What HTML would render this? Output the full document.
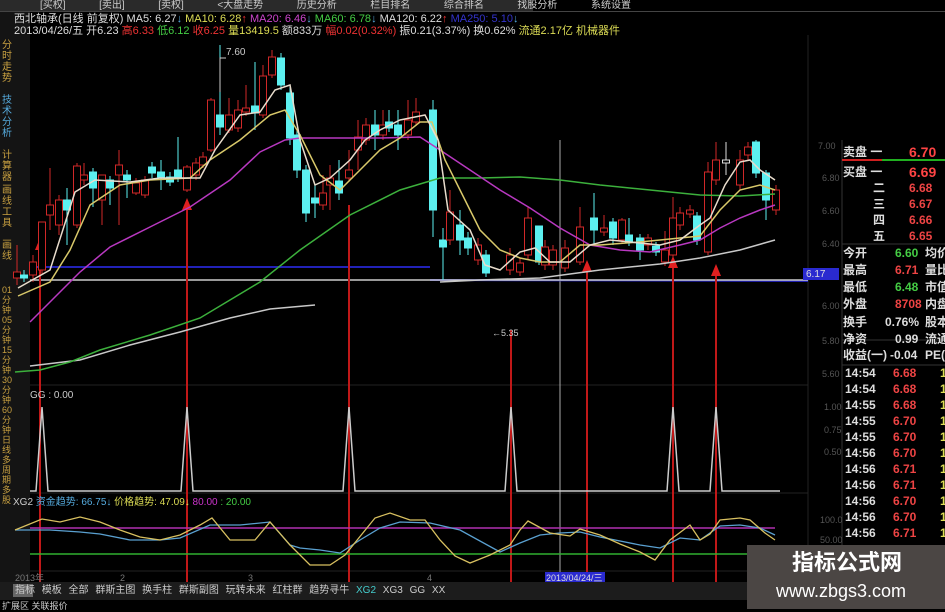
<!DOCTYPE html>
<html><head><meta charset="utf-8">
<style>
body{margin:0;background:#000;width:945px;height:609px;overflow:hidden;position:relative;font-family:"Liberation Sans","Noto Sans CJK SC",sans-serif}
.t{position:absolute;white-space:nowrap;font-size:11px;line-height:12px}
.rp{position:absolute;left:843px;width:110px;font-size:12px;line-height:14px;font-weight:bold;color:#ddd;white-space:nowrap}
.rp span{position:absolute;white-space:nowrap}
</style></head><body>
<svg width="945" height="609" style="position:absolute;left:0;top:0" xmlns="http://www.w3.org/2000/svg">
<rect x="0" y="0" width="533" height="11" fill="#2a2a2a"/>
<rect x="0" y="11" width="945" height="1" fill="#444"/>
<rect x="0" y="12" width="30" height="570" fill="#141414"/>
<g stroke="#222" stroke-width="1">
<line x1="30" y1="385" x2="808" y2="385"/><line x1="30" y1="493" x2="808" y2="493"/><line x1="30" y1="571" x2="808" y2="571"/>
<line x1="808" y1="35" x2="808" y2="571"/>
</g>
<line x1="842" y1="140" x2="842" y2="560" stroke="#333"/>
<line x1="842" y1="340" x2="945" y2="340" stroke="#333"/>
<line x1="842" y1="244" x2="945" y2="244" stroke="#333"/>
<line x1="842" y1="365" x2="945" y2="365" stroke="#333"/>
<line x1="560" y1="140" x2="560" y2="576" stroke="#aaa" stroke-width="1"/>
<line x1="30" y1="267" x2="430" y2="267" stroke="#2222b8" stroke-width="2"/>
<line x1="430" y1="280" x2="808" y2="281" stroke="#2222b8" stroke-width="2"/>
<line x1="30" y1="280" x2="808" y2="280" stroke="#ccc" stroke-width="1.5"/>
<rect x="803" y="268" width="36" height="12" fill="#2a2ad0"/>
<g stroke="#c01818" stroke-width="2">
<line x1="40" y1="245" x2="40" y2="582"/><line x1="187" y1="205" x2="187" y2="582"/><line x1="349" y1="205" x2="349" y2="582"/>
<line x1="511" y1="330" x2="511" y2="582"/><line x1="587" y1="265" x2="587" y2="582"/><line x1="673" y1="262" x2="673" y2="582"/><line x1="716" y1="270" x2="716" y2="582"/>
</g>
<g fill="#e02020"><polygon points="35,250 40,238 45,250"/><polygon points="182,210 187,198 192,210"/><polygon points="582,272 587,260 592,272"/><polygon points="668,268 673,256 678,268"/><polygon points="711,276 716,264 721,276"/></g>
<g id="candles"></g>
<g fill="none" stroke-width="1.5">
<polyline stroke="#c8c8c8" points="30,366 80,360 130,345 180,332 230,318 270,309 315,305"/>
<polyline stroke="#c8c8c8" points="440,282 480,280 540,278 600,270 660,264 700,258 740,250 775,240"/>
<polyline stroke="#3cb03c" points="15,372 40,370 70,362 100,350 150,335 200,318 260,282 300,250 350,215 400,190 440,178 480,178 520,177 560,180 600,185 650,190 700,195 740,196 775,194"/>
<polyline stroke="#b838c0" points="30,322 50,302 80,272 110,247 150,227 190,207 230,180 260,152 285,140 300,138 340,138 380,138 420,137 440,150 470,170 500,190 530,208 560,228 590,245 620,250 650,252 680,245 700,240 720,228 740,218 760,210 775,205"/>
<polyline stroke="#d8c86a" points="18,296 50,282 70,250 90,205 120,185 150,180 190,178 210,160 240,140 270,115 285,110 300,135 320,175 340,190 360,170 380,150 400,138 420,122 432,122 445,160 460,190 480,230 500,250 520,258 540,262 560,262 580,245 600,245 640,242 680,238 700,236 720,210 740,190 760,185 775,190"/>
<polyline stroke="#e8dccc" points="18,288 50,270 75,192 95,180 130,182 160,178 200,178 215,150 240,115 260,112 275,90 290,85 300,140 315,185 330,178 350,160 365,140 380,130 400,120 425,115 438,140 448,210 470,230 485,265 500,270 520,252 535,248 550,262 570,262 590,245 610,240 640,243 660,245 680,240 700,225 710,218 725,185 740,162 750,160 760,170 775,180"/>
</g>
<polyline fill="none" stroke="#ccc" points="220,92 220,58 226,58"/>
<polyline fill="none" stroke="#ccc" stroke-width="1.5" points="30,491 36,491 42,407 48,491 181,491 187,407 193,491 343,491 349,407 355,491 505,491 511,407 517,491 667,491 673,407 679,491 710,491 716,407 722,491 780,491"/>
<line x1="30" y1="528" x2="775" y2="528" stroke="#b030b0" stroke-width="1.5"/>
<line x1="30" y1="554" x2="775" y2="554" stroke="#30b030" stroke-width="1.5"/>
<polyline fill="none" stroke="#5aa0d0" stroke-width="1.3" points="15,530 50,530 80,532 100,534 130,540 160,540 180,538 210,525 240,525 270,522 290,545 300,548 320,550 340,553 360,540 380,528 400,522 430,523 460,530 500,552 520,543 540,535 560,533 580,532 600,537 640,545 660,548 680,538 700,540 720,526 740,525 760,528 775,535"/>
<polyline fill="none" stroke="#d8c060" stroke-width="1.3" points="15,530 42,519 60,522 80,517 100,522 120,530 140,537 160,540 180,535 200,525 212,518 230,540 255,540 270,522 290,545 310,565 330,565 345,555 375,518 390,513 410,520 425,520 440,540 455,556 470,563 490,555 510,545 520,530 528,521 550,533 570,536 580,529 600,535 620,544 640,552 655,560 670,540 690,525 700,540 710,534 720,520 740,518 750,520 765,533 775,540"/>
<rect x="545" y="572" width="60" height="11" fill="#2a2ad0"/>
<rect x="0" y="582" width="945" height="18" fill="#1c1c1c"/>
<rect x="13" y="584" width="20" height="13" fill="#666"/>
<rect x="842" y="159" width="40" height="2" fill="#d02020"/><rect x="882" y="159" width="63" height="2" fill="#20b020"/>
</svg>
<div class="t" style="left:40px;top:0;color:#ccc;font-size:10px;word-spacing:14px">[买权]&nbsp;&nbsp;[卖出]&nbsp;&nbsp;[卖权]&nbsp;&nbsp;&lt;大盘走势&nbsp;&nbsp;历史分析&nbsp;&nbsp;栏目排名&nbsp;&nbsp;综合排名&nbsp;&nbsp;找股分析&nbsp;&nbsp;系统设置</div>
<div class="t" style="left:14px;top:13px;color:#ddd">西北轴承(日线 前复权) MA5: 6.27<span style="color:#5ad">↓</span> <span style="color:#dd5">MA10: 6.28</span><span style="color:#e33">↑</span> <span style="color:#c4c">MA20: 6.46</span><span style="color:#5ad">↓</span> <span style="color:#4c4">MA60: 6.78</span><span style="color:#5ad">↓</span> MA120: 6.22<span style="color:#e33">↑</span> <span style="color:#33c">MA250: 5.10</span><span style="color:#5ad">↓</span></div>
<div class="t" style="left:14px;top:25px;color:#ddd">2013/04/26/五 开6.23 <span style="color:#e33">高6.33</span> <span style="color:#4c4">低6.12</span> <span style="color:#e33">收6.25</span> <span style="color:#dd5">量13419.5</span> 额833万 <span style="color:#e33">幅0.02(0.32%)</span> 振0.21(3.37%) 换0.62% <span style="color:#dd5">流通2.17亿 机械器件</span></div>
<div class="t" style="left:2px;top:40px;width:12px;color:#c8a040;font-size:10px;line-height:11px;white-space:normal">分时走势</div>
<div class="t" style="left:2px;top:95px;width:12px;color:#5ad;font-size:10px;line-height:11px;white-space:normal">技术分析</div>
<div class="t" style="left:2px;top:150px;width:12px;color:#c8a040;font-size:10px;line-height:11px;white-space:normal">计算器</div>
<div class="t" style="left:2px;top:185px;width:12px;color:#c8a040;font-size:10px;line-height:11px;white-space:normal">画线工具</div>
<div class="t" style="left:2px;top:240px;width:12px;color:#c8a040;font-size:10px;line-height:11px;white-space:normal">画线</div>
<div class="t" style="left:2px;top:285px;width:12px;color:#c8a040;font-size:9px;line-height:10px;white-space:normal">01分钟 05分钟 15分钟 30分钟 60分钟 日线 多周期 多股</div>
<div class="t" style="left:226px;top:47px;color:#ccc;font-size:10px">7.60</div>
<div class="t" style="left:492px;top:327px;color:#ccc;font-size:9px">←5.35</div>
<div class="t" style="left:30px;top:390px;color:#ccc;font-size:10px">GG : 0.00</div>
<div class="t" style="left:13px;top:497px;color:#ccc;font-size:10px">XG2 <span style="color:#5ad">资金趋势: 66.75↓</span> <span style="color:#dd5">价格趋势: 47.09↓</span> <span style="color:#c3c">80.00</span> <span style="color:#4c4">: 20.00</span></div>
<div class="t" style="left:15px;top:572px;color:#777;font-size:9px">2013年</div>
<div class="t" style="left:120px;top:572px;color:#777;font-size:9px">2</div>
<div class="t" style="left:248px;top:572px;color:#777;font-size:9px">3</div>
<div class="t" style="left:427px;top:572px;color:#777;font-size:9px">4</div>
<div class="t" style="left:546px;top:572px;color:#ddd;font-size:9px">2013/04/24/三</div>
<div class="t" style="left:15px;top:585px;color:#ccc;font-size:10px;word-spacing:4px">指标 模板 全部 群斯主图 换手柱 群斯副图 玩转未来 红柱群 趋势寻牛 <span style="color:#4cc">XG2</span> XG3 GG XX</div>
<div class="t" style="left:2px;top:600px;color:#ccc;font-size:9px">扩展区 关联报价</div>
<div class="t" style="left:818px;top:140px;color:#555;font-size:9px">7.00</div>
<div class="t" style="left:822px;top:172px;color:#555;font-size:9px">6.80</div>
<div class="t" style="left:822px;top:205px;color:#555;font-size:9px">6.60</div>
<div class="t" style="left:822px;top:238px;color:#555;font-size:9px">6.40</div>
<div class="t" style="left:806px;top:269px;color:#ddd;font-size:10px">6.17</div>
<div class="t" style="left:822px;top:300px;color:#555;font-size:9px">6.00</div>
<div class="t" style="left:822px;top:335px;color:#555;font-size:9px">5.80</div>
<div class="t" style="left:822px;top:368px;color:#555;font-size:9px">5.60</div>
<div class="t" style="left:824px;top:401px;color:#555;font-size:9px">1.00</div>
<div class="t" style="left:824px;top:424px;color:#555;font-size:9px">0.75</div>
<div class="t" style="left:824px;top:446px;color:#555;font-size:9px">0.50</div>
<div class="t" style="left:820px;top:514px;color:#555;font-size:9px">100.0</div>
<div class="t" style="left:820px;top:534px;color:#555;font-size:9px">50.00</div>
<div class="rp" style="top:145px;height:14px"><span style="left:0">卖盘 一</span><span style="left:66px;color:#f44;font-size:14px">6.70</span></div>
<div class="rp" style="top:165px;height:14px"><span style="left:0">买盘 一</span><span style="left:66px;color:#f44;font-size:14px">6.69</span></div>
<div class="rp" style="top:181px"><span style="left:30px">二</span><span style="left:66px;color:#e44">6.68</span></div>
<div class="rp" style="top:197px"><span style="left:30px">三</span><span style="left:66px;color:#e44">6.67</span></div>
<div class="rp" style="top:213px"><span style="left:30px">四</span><span style="left:66px;color:#e44">6.66</span></div>
<div class="rp" style="top:229px"><span style="left:30px">五</span><span style="left:66px;color:#e44">6.65</span></div>
<div class="rp" style="top:246px"><span style="left:0">今开</span><span style="left:52px;color:#4c4">6.60</span><span style="left:82px">均价</span></div>
<div class="rp" style="top:263px"><span style="left:0">最高</span><span style="left:52px;color:#e44">6.71</span><span style="left:82px">量比</span></div>
<div class="rp" style="top:280px"><span style="left:0">最低</span><span style="left:52px;color:#4c4">6.48</span><span style="left:82px">市值</span></div>
<div class="rp" style="top:297px"><span style="left:0">外盘</span><span style="left:52px;color:#e44">8708</span><span style="left:82px">内盘</span></div>
<div class="rp" style="top:315px"><span style="left:0">换手</span><span style="left:42px">0.76%</span><span style="left:82px">股本</span></div>
<div class="rp" style="top:332px"><span style="left:0">净资</span><span style="left:52px">0.99</span><span style="left:82px">流通</span></div>
<div class="rp" style="top:348px"><span style="left:0">收益(一)</span><span style="left:47px">-0.04</span><span style="left:82px">PE(动)</span></div>
<div id="ticks"></div>
<div style="position:absolute;left:747px;top:545px;width:198px;height:64px;background:#4b4644"></div>
<div class="t" style="left:792px;top:550px;color:#fff;font-size:22px;line-height:26px;font-weight:bold">指标公式网</div>
<div class="t" style="left:776px;top:580px;color:#fff;font-size:18px;line-height:22px">www.zbgs3.com</div>
<script>
var C=[[17,272,278,245,285,'r'],[24,275,278,270,282,'c'],[33,262,275,255,282,'r'],[42,222,270,222,275,'r'],[50,205,215,168,230,'r'],[59,200,225,195,235,'r'],[67,200,210,188,245,'c'],[77,166,225,163,228,'r'],[84,175,180,163,185,'r'],[93,172,188,168,207,'c'],[102,175,200,175,225,'r'],[110,180,188,176,205,'c'],[119,165,175,150,225,'r'],[127,175,180,170,198,'c'],[136,183,193,178,195,'r'],[145,180,195,176,198,'r'],[152,167,173,162,178,'c'],[161,172,177,160,190,'c'],[170,177,182,172,186,'c'],[178,170,178,137,182,'c'],[187,167,190,165,192,'r'],[196,163,175,158,180,'r'],[203,157,165,152,168,'r'],[211,100,150,98,152,'r'],[220,115,127,45,135,'c'],[229,115,130,98,133,'r'],[238,110,128,100,132,'r'],[246,108,112,85,116,'r'],[255,106,113,62,130,'c'],[263,76,115,65,118,'r'],[272,57,75,50,78,'r'],[281,58,85,53,90,'c'],[290,93,138,87,145,'c'],[297,135,170,130,178,'c'],[306,170,213,165,222,'c'],[315,198,203,185,218,'c'],[323,193,205,175,210,'r'],[330,178,185,165,210,'r'],[339,181,193,160,200,'c'],[349,170,178,150,182,'r'],[358,137,150,120,170,'r'],[366,125,140,118,145,'r'],[375,125,135,110,150,'c'],[383,125,135,110,140,'r'],[389,122,128,110,132,'c'],[398,125,135,110,150,'c'],[408,120,135,100,140,'r'],[416,112,122,98,126,'r'],[433,110,210,100,237,'c'],[443,240,247,228,280,'c'],[450,212,240,190,245,'r'],[460,225,240,210,255,'c'],[468,238,248,232,255,'c'],[478,245,260,238,265,'r'],[486,255,273,250,277,'c'],[510,255,270,248,275,'r'],[520,263,272,258,276,'r'],[528,218,255,207,260,'r'],[539,226,262,227,265,'c'],[545,247,265,240,270,'r'],[553,250,265,245,270,'r'],[565,248,268,240,272,'r'],[580,227,262,207,265,'r'],[594,218,230,193,245,'c'],[604,228,232,215,236,'r'],[613,222,238,218,245,'c'],[622,220,240,218,244,'r'],[629,235,242,218,246,'c'],[640,238,250,234,260,'c'],[648,238,245,234,250,'r'],[656,246,252,242,256,'c'],[665,250,262,231,266,'r'],[673,218,255,197,258,'r'],[680,213,225,207,230,'r'],[690,210,214,205,218,'r'],[697,216,240,212,245,'c'],[708,172,252,162,255,'r'],[716,160,180,142,185,'r'],[726,160,163,142,175,'w'],[740,160,185,150,190,'r'],[748,147,155,142,160,'r'],[756,142,173,140,178,'c'],[766,173,200,170,220,'c'],[776,190,210,185,215,'r']];
var s='';C.forEach(function(c){var col=c[5]=='c'?'#5cf0f0':c[5]=='w'?'#ddd':'#d02828';
s+='<line x1="'+c[0]+'" y1="'+c[3]+'" x2="'+c[0]+'" y2="'+c[4]+'" stroke="'+col+'"/>';
s+='<rect x="'+(c[0]-3.5)+'" y="'+c[1]+'" width="7" height="'+Math.max(2,c[2]-c[1])+'" fill="'+(c[5]=='c'?col:'#000')+'" stroke="'+col+'"/>';});
document.getElementById('candles').innerHTML=s;
var T=[['14:54','6.68'],['14:54','6.68'],['14:55','6.68'],['14:55','6.70'],['14:55','6.70'],['14:56','6.70'],['14:56','6.71'],['14:56','6.71'],['14:56','6.70'],['14:56','6.70'],['14:56','6.71']];
var h='';T.forEach(function(t,i){h+='<div class="rp" style="top:'+(366+i*16)+'px"><span style="left:2px">'+t[0]+'</span><span style="left:50px;color:#e44">'+t[1]+'</span><span style="left:97px;color:#dd5">1</span></div>';});
document.getElementById('ticks').innerHTML=h;
</script>
</body></html>
